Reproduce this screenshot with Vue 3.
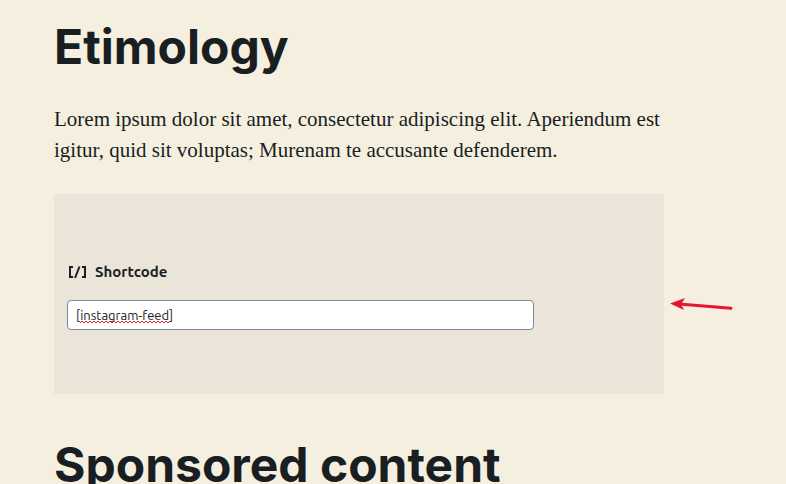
<template>
  <main class="editor">
    <h2 class="heading">Etimology</h2>
    <p class="paragraph">
      Lorem ipsum dolor sit amet, consectetur adipiscing elit. Aperiendum est
      igitur, quid sit voluptas; Murenam te accusante defenderem.
    </p>

    <section class="shortcode-row">
      <div class="shortcode-block">
        <label class="shortcode-label" for="shortcode-input">
          <svg class="shortcode-icon" viewBox="0 0 20 14" aria-hidden="true">
            <path d="M6 2H3v10h3M15 2h3v10h-3" />
            <path d="M12.5 1.5L8 13" />
          </svg>
          <span>Shortcode</span>
        </label>
        <div class="shortcode-field">
          <input
            id="shortcode-input"
            v-model="shortcode"
            class="shortcode-input"
            type="text"
            spellcheck="false"
          />
          <svg class="spelling-mark" viewBox="0 0 91 4" aria-hidden="true">
            <path :d="wavePath" />
          </svg>
        </div>
      </div>

      <svg class="arrow" viewBox="0 0 64 16" aria-hidden="true">
        <path class="arrow-line" d="M9 6L61 10.3" />
        <path class="arrow-head" d="M0 5.5L15 0L11 6.2L14 12Z" />
      </svg>
    </section>

    <h2 class="heading">Sponsored content</h2>
  </main>
</template>

<script setup>
import { ref } from 'vue'

const shortcode = ref('[instagram-feed]')

// zigzag under the misspelled word
const points = Array.from({ length: 46 }, (_, i) => `${i * 2} ${i % 2 ? 1 : 3}`)
const wavePath = `M${points.join('L')}`
</script>

<style>
body {
  margin: 0;
  background: #f5efe0;
}
</style>

<style scoped>
.editor {
  box-sizing: border-box;
  padding: 18px 52px 0 54px;
  color: #191e23;
}

.heading {
  margin: 0;
  font-family: Inter, sans-serif;
  font-size: 48px;
  font-weight: 700;
  line-height: 58px;
  white-space: nowrap;
}

.paragraph {
  max-width: 610px;
  margin: 28px 0;
  font-family: "Liberation Serif", serif;
  font-size: 21px;
  line-height: 31px;
}

.shortcode-row {
  display: flex;
  align-items: center;
  gap: 6px;
  margin-bottom: 42px;
}

.shortcode-block {
  box-sizing: border-box;
  flex: 1;
  max-width: 610px;
  min-height: 200px;
  padding: 18px 13px 14px;
  display: flex;
  flex-direction: column;
  justify-content: center;
  gap: 18px;
  background: #ebe4d9;
  font-family: Ubuntu, "Noto Sans", sans-serif;
  font-size: 13px;
}

.shortcode-label {
  display: flex;
  align-items: center;
  gap: 8px;
  font-size: 15px;
  font-weight: 700;
  line-height: 20px;
}

.shortcode-icon {
  width: 20px;
  height: 14px;
  fill: none;
  stroke: #191e23;
  stroke-width: 2;
}

.shortcode-field {
  position: relative;
  width: 80%;
}

.shortcode-input {
  display: block;
  box-sizing: border-box;
  width: 100%;
  height: 30px;
  padding: 0 8px;
  border: 1px solid #7e8993;
  border-radius: 4px;
  background: #fff;
  color: #191e23;
  font-family: inherit;
  font-size: inherit;
}

.spelling-mark {
  position: absolute;
  left: 13px;
  bottom: 6px;
  width: 91px;
  height: 4px;
  fill: none;
  stroke: #e01b24;
  stroke-width: 1;
}

.arrow {
  flex: none;
  width: 64px;
  height: 16px;
  margin-top: 24px;
}

.arrow-line {
  fill: none;
  stroke: #e6142d;
  stroke-width: 3;
  stroke-linecap: round;
}

.arrow-head {
  fill: #e6142d;
}
</style>
